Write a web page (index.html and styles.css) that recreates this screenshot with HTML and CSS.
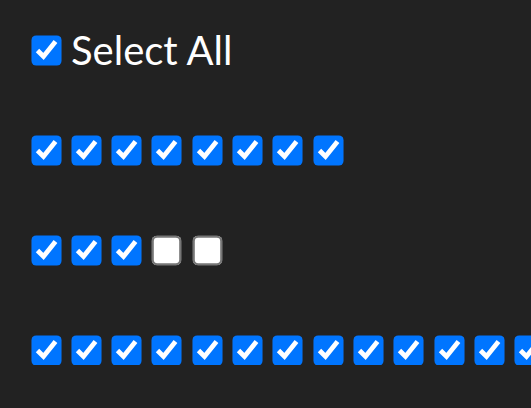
FILE: index.html
```html
<!DOCTYPE html>
<html lang="en">
<head>
    <meta charset="UTF-8">
    <meta name="viewport" content="width=device-width, initial-scale=1.0">
    <title>Select All</title>
    <link rel="stylesheet" href="styles.css">
</head>
<body>

    <label class="select-all">
        <input type="checkbox" class="box" checked>
        <span>Select All</span>
    </label>

    <div class="group">
        <input type="checkbox" class="box" checked>
        <input type="checkbox" class="box" checked>
        <input type="checkbox" class="box" checked>
        <input type="checkbox" class="box" checked>
        <input type="checkbox" class="box" checked>
        <input type="checkbox" class="box" checked>
        <input type="checkbox" class="box" checked>
        <input type="checkbox" class="box" checked>
    </div>

    <div class="group">
        <input type="checkbox" class="box" checked>
        <input type="checkbox" class="box" checked>
        <input type="checkbox" class="box" checked>
        <input type="checkbox" class="box">
        <input type="checkbox" class="box">
    </div>

    <div class="group">
        <input type="checkbox" class="box" checked>
        <input type="checkbox" class="box" checked>
        <input type="checkbox" class="box" checked>
        <input type="checkbox" class="box" checked>
        <input type="checkbox" class="box" checked>
        <input type="checkbox" class="box" checked>
        <input type="checkbox" class="box" checked>
        <input type="checkbox" class="box" checked>
        <input type="checkbox" class="box" checked>
        <input type="checkbox" class="box" checked>
        <input type="checkbox" class="box" checked>
        <input type="checkbox" class="box" checked>
        <input type="checkbox" class="box" checked>
        <input type="checkbox" class="box" checked>
    </div>

</body>
</html>
```

FILE: styles.css
```css
html, body {
    overflow: hidden;
}
body {
    margin: 0;
    padding: 35px 0 0 31px;
    background-color: #222222;
    color: #ffffff;
    font-family: Lato, "Open Sans", sans-serif;
    display: flex;
    flex-direction: column;
    gap: 70px;
}
.select-all {
    display: flex;
    align-items: center;
    gap: 10px;
    height: 30px;
    font-size: 40px;
    white-space: nowrap;
}
.group {
    display: flex;
    align-items: center;
    gap: 10.33px;
    height: 30px;
}
/* native 13px checkbox scaled up to 30px */
.box {
    width: 13px;
    height: 13px;
    margin: 8.5px;
    flex-shrink: 0;
    transform: scale(2.3077);
}
```
